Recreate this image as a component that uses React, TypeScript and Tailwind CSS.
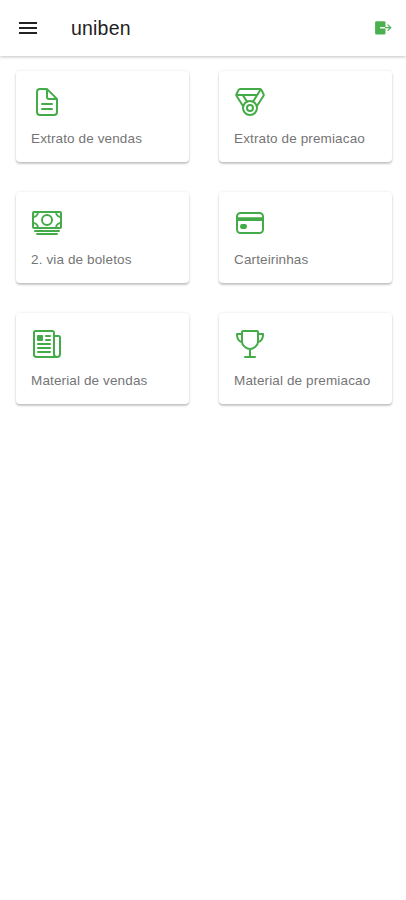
import React from 'react';
import { IconType } from 'react-icons';
import {
  IoCardOutline,
  IoCashOutline,
  IoDocumentTextOutline,
  IoMedalOutline,
  IoNewspaperOutline,
  IoTrophyOutline,
} from 'react-icons/io5';
import { MdMenu } from 'react-icons/md';

interface MenuItem {
  label: string;
  icon: IconType;
}

const items: MenuItem[] = [
  { label: 'Extrato de vendas', icon: IoDocumentTextOutline },
  { label: 'Extrato de premiacao', icon: IoMedalOutline },
  { label: '2. via de boletos', icon: IoCashOutline },
  { label: 'Carteirinhas', icon: IoCardOutline },
  { label: 'Material de vendas', icon: IoNewspaperOutline },
  { label: 'Material de premiacao', icon: IoTrophyOutline },
];

const LogoutIcon: React.FC = () => (
  <svg width="17" height="14" viewBox="0 0 17 14" fill="none">
    <path
      d="M1.5 0.2h7.6a1.4 1.4 0 0 1 1.4 1.4v4.3H5.2v1.5h5.3v4.8a1.4 1.4 0 0 1-1.4 1.4H1.5A1.4 1.4 0 0 1 .1 12.200V1.600A1.4 1.4 0 0 1 1.500.2z"
      fill="currentColor"
    />
    <path
      d="M10.500 6.650h5M13 3.900l2.800 2.750L13 9.400"
      stroke="currentColor"
      strokeWidth="1.300"
      strokeLinecap="round"
      strokeLinejoin="round"
    />
  </svg>
);

const Header: React.FC = () => (
  <header className="flex h-14 items-center bg-white pl-4 pr-3.5 shadow-[0_1px_3px_rgba(0,0,0,0.24)]">
    <button aria-label="Menu" className="text-[#222]">
      <MdMenu size={24} />
    </button>
    <h1 className="ml-[31px] flex-1 pt-px text-[19.5px] tracking-[0.2px] text-[#222]">uniben</h1>
    <button aria-label="Sair" className="text-[#4caf50]">
      <LogoutIcon />
    </button>
  </header>
);

const MenuCard: React.FC<MenuItem> = ({ label, icon: Icon }) => (
  <button className="flex h-[91px] flex-col items-start rounded bg-white px-[15px] pt-[15px] text-left shadow-[0_2px_2px_rgba(0,0,0,0.2),0_0_3px_rgba(0,0,0,0.1)]">
    <Icon size={32} className="text-[#43ab47]" />
    <span className="mt-3 whitespace-nowrap text-[13.5px] leading-[18px] tracking-[0.13px] text-[#757575]">
      {label}
    </span>
  </button>
);

export default function App() {
  return (
    <div className="min-h-screen bg-white font-['Liberation_Sans',sans-serif]">
      <Header />
      <main className="grid grid-cols-2 gap-x-[30px] gap-y-[30px] pl-4 pr-3.5 pt-[15px]">
        {items.map((item) => (
          <MenuCard key={item.label} {...item} />
        ))}
      </main>
    </div>
  );
}
